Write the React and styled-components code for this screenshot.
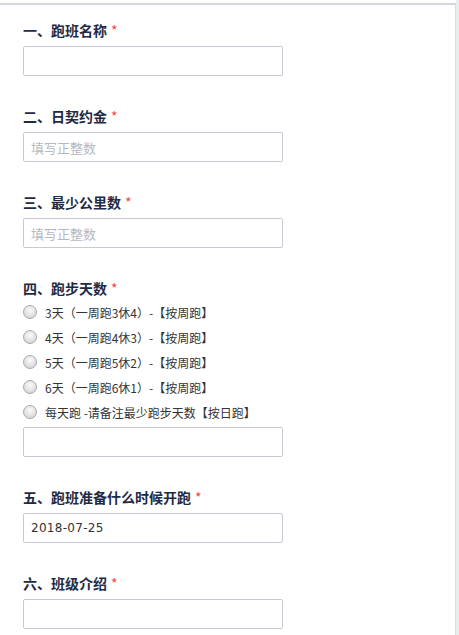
import React from 'react'
import styled, { createGlobalStyle } from 'styled-components'

const GlobalStyle = createGlobalStyle`
  html, body {
    margin: 0;
    padding: 0;
    background: #fff;
  }
  body {
    font-family: "Liberation Sans", "Noto Sans CJK SC", sans-serif;
  }
`

const sections = [
  { title: '一、跑班名称', kind: 'text' },
  { title: '二、日契约金', kind: 'text', placeholder: '填写正整数' },
  { title: '三、最少公里数', kind: 'text', placeholder: '填写正整数' },
  {
    title: '四、跑步天数',
    kind: 'radio',
    options: [
      '3天（一周跑3休4）-【按周跑】',
      '4天（一周跑4休3）-【按周跑】',
      '5天（一周跑5休2）-【按周跑】',
      '6天（一周跑6休1）-【按周跑】',
      '每天跑 -请备注最少跑步天数【按日跑】',
    ],
  },
  { title: '五、跑班准备什么时候开跑', kind: 'text', value: '2018-07-25', date: true },
  { title: '六、班级介绍', kind: 'text' },
]

const App = () => {
  return (
    <Page>
      <GlobalStyle />
      <Panel>
        {sections.map(s => (
          <Section key={s.title}>
            <Heading>
              {s.title}
              <Star>*</Star>
            </Heading>
            {s.kind === 'radio' && (
              <RadioList>
                {s.options.map(o => (
                  <RadioRow key={o}>
                    <RadioDot />
                    <span>{o}</span>
                  </RadioRow>
                ))}
              </RadioList>
            )}
            <Field
              type="text"
              placeholder={s.placeholder || ''}
              defaultValue={s.value || ''}
              $date={s.date}
            />
          </Section>
        ))}
      </Panel>
      <Gutter />
    </Page>
  )
}

export default App

const Page = styled.div`
  display: flex;
  width: 459px;
  min-height: 635px;
`
const Panel = styled.div`
  width: 456px;
  margin-top: 3px;
  border-top: 2px solid #d3d6da;
  border-right: 1px solid #d8dcdf;
  padding: 15px 0 0 23px;
  box-sizing: border-box;
  background: #fff;
`
const Gutter = styled.div`
  flex: 1;
  background: #e9ecec;
`
const Section = styled.div`
  margin-bottom: 30px;
`
const Heading = styled.div`
  font-family: "Noto Sans CJK SC", sans-serif;
  font-size: 14px;
  font-weight: 700;
  line-height: 20px;
  color: #1f2a44;
  margin-bottom: 6px;
`
const Star = styled.span`
  color: #f5443f;
  margin-left: 4px;
  font-weight: 400;
`
const RadioList = styled.div`
  display: flex;
  flex-direction: column;
  margin-top: -4px;
  margin-bottom: 2px;
`
const RadioRow = styled.label`
  display: flex;
  align-items: center;
  height: 25px;
  font-family: "Noto Sans CJK SC", sans-serif;
  font-size: 12px;
  color: #333;
  gap: 8px;
`
const RadioDot = styled.span`
  width: 12px;
  height: 12px;
  border-radius: 50%;
  border: 1px solid #a9a9a9;
  background: radial-gradient(circle at 50% 35%, #fafafa 0%, #e2e2e2 55%, #c9c9c9 100%);
  box-sizing: content-box;
  margin-top: -2px;
`
const Field = styled.input`
  display: block;
  width: 260px;
  height: 30px;
  box-sizing: border-box;
  border: 1px solid #c6cad2;
  border-radius: 2px;
  padding: 0 7px;
  font-family: ${p => (p.$date ? '"DejaVu Sans", sans-serif' : '"Noto Sans CJK SC", sans-serif')};
  font-size: ${p => (p.$date ? '12px' : '13px')};
  letter-spacing: ${p => (p.$date ? '0.3px' : '0')};
  color: #333;
  background: #fff;
  outline: none;
  &::placeholder {
    color: #b5b8bf;
  }
`
